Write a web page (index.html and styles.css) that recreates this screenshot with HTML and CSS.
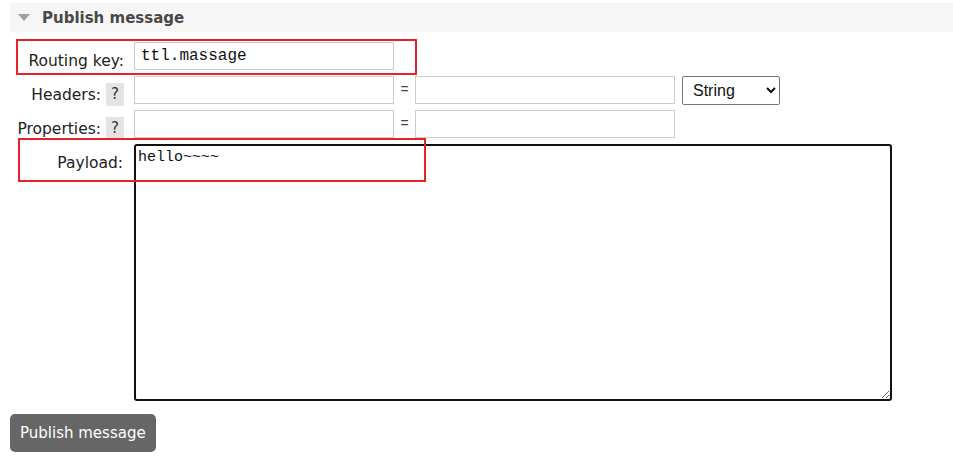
FILE: index.html
```html
<!DOCTYPE html>
<html lang="en">
<head>
    <meta charset="UTF-8">
    <title>Publish message</title>
    <link rel="stylesheet" href="styles.css">
</head>
<body>
    <div class="section">
        <h2 class="section-title"><span class="arrow"></span>Publish message</h2>

        <div class="publish-form">
            <div class="mark mark-routing"></div>
            <div class="mark mark-payload"></div>

            <div class="row">
                <label class="label">Routing key:</label>
                <input type="text" class="field mono" value="ttl.massage">
            </div>

            <div class="row">
                <label class="label">Headers: <span class="help">?</span></label>
                <input type="text" class="field">
                <span class="eq">=</span>
                <input type="text" class="field">
                <select class="type-select">
                    <option>String</option>
                </select>
            </div>

            <div class="row">
                <label class="label">Properties: <span class="help">?</span></label>
                <input type="text" class="field">
                <span class="eq">=</span>
                <input type="text" class="field">
            </div>

            <div class="row payload-row">
                <label class="label payload-label">Payload:</label>
                <textarea class="payload">hello~~~~</textarea>
            </div>
        </div>

        <button class="publish-btn">Publish message</button>
    </div>
</body>
</html>
```

FILE: styles.css
```css
body {
    margin: 0;
    font-family: "DejaVu Sans", Verdana, sans-serif;
    font-size: 12px;
    color: #222;
    background: #fff;
}
.section {
    padding: 3px 0 0 10px;
}
.section-title {
    display: flex;
    align-items: center;
    height: 29px;
    margin: 0;
    padding-left: 8px;
    background-color: #f6f6f6;
    font-size: 15px;
    font-weight: bold;
    color: #484848;
}
.arrow {
    width: 0;
    height: 0;
    margin-right: 12px;
    border-left: 6px solid transparent;
    border-right: 6px solid transparent;
    border-top: 7px solid #a0a0a0;
}
.publish-form {
    position: relative;
    margin-top: 10px;
}
.row {
    display: flex;
    align-items: flex-start;
    height: 28px;
    margin-bottom: 6px;
}
.payload-row {
    height: auto;
}
.label {
    box-sizing: border-box;
    display: flex;
    justify-content: flex-end;
    align-items: flex-start;
    width: 114px;
    height: 28px;
    padding-top: 10px;
    margin-right: 10px;
    font-size: 15.5px;
    line-height: 18px;
    color: #222;
    white-space: nowrap;
}
.help {
    flex: none;
    width: 18px;
    height: 23px;
    margin-left: 5px;
    margin-top: -3px;
    font-size: 15px;
    line-height: 23px;
    text-align: center;
    background-color: #e4e4e4;
    color: #333;
}
.field {
    box-sizing: border-box;
    width: 260px;
    height: 28px;
    margin: 0;
    padding: 0 6px;
    border: 1px solid #ccc;
    font-size: 13px;
}
.mono {
    font-family: "Liberation Mono", "Courier New", monospace;
    font-size: 16px;
    color: #111;
}
.eq {
    width: 21px;
    padding-top: 5px;
    text-align: center;
    font-family: "Liberation Sans", Arial, sans-serif;
    font-size: 14px;
    color: #444;
}
.type-select {
    box-sizing: border-box;
    width: 98px;
    height: 29px;
    margin-left: 7px;
    padding-left: 6px;
    font-family: "Liberation Sans", Arial, sans-serif;
    font-size: 16px;
    color: #111;
    border: 1px solid #767676;
    border-radius: 2px;
    background: #fff;
}
.payload-label {
    width: 113px;
    margin-right: 11px;
}
.payload {
    box-sizing: border-box;
    width: 758px;
    height: 257px;
    margin: 0;
    padding: 3px 2px;
    border: 2px solid #111;
    border-radius: 3px;
    outline: none;
    font-family: "Liberation Mono", "Courier New", monospace;
    font-size: 15px;
    color: #111;
}
.mark {
    position: absolute;
    border: 2px solid #e8202a;
}
.mark-routing {
    left: 6px;
    top: -3px;
    width: 397px;
    height: 32px;
}
.mark-payload {
    left: 8px;
    top: 96px;
    width: 404px;
    height: 40px;
}
.publish-btn {
    margin-top: 7px;
    padding: 0 10px;
    height: 38px;
    border: none;
    border-radius: 5px;
    background-color: #666;
    color: #fff;
    font-family: "DejaVu Sans", Verdana, sans-serif;
    font-size: 15px;
}
```
